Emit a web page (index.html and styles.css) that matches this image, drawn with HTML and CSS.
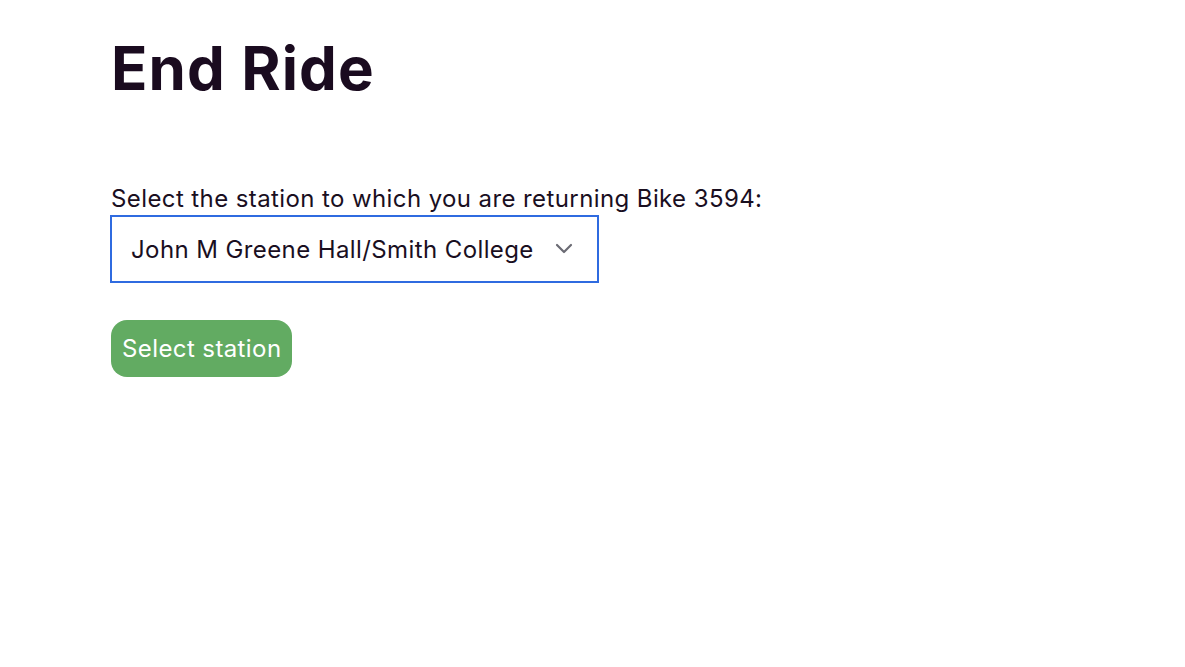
FILE: index.html
```html
<!DOCTYPE html>
<html lang="en">
<head>
<meta charset="utf-8">
<title>End Ride</title>
<link rel="stylesheet" href="styles.css">
</head>
<body>
<main class="page">
  <h1 class="title">End Ride</h1>
  <form class="form">
    <label class="label" for="station">Select the station to which you are returning Bike 3594:</label>
    <div class="select-wrap">
      <span class="select-value">John M Greene Hall/Smith College</span>
      <svg class="chevron" width="20" height="12" viewBox="0 0 20 12" aria-hidden="true">
        <path d="M3 2 L10 9 L17 2" fill="none" stroke="#6b6b74" stroke-width="2.2" stroke-linecap="round" stroke-linejoin="round"/>
      </svg>
    </div>
    <button type="button" class="btn">Select station</button>
  </form>
</main>
</body>
</html>
```

FILE: styles.css
```css
* { box-sizing: border-box; }
html, body { margin: 0; padding: 0; background: #fff; }
body {
  font-family: Inter, "Noto Sans", sans-serif;
  color: #1a0f1f;
}
.page {
  padding: 28px 0 0 111px;
}
.title {
  margin: 0;
  font-size: 60px;
  font-weight: 700;
  line-height: 80px;
  letter-spacing: 1.1px;
  color: #1a0b1f;
}
.form {
  margin-top: 76px;
  display: flex;
  flex-direction: column;
  align-items: flex-start;
}
.label {
  font-size: 24px;
  line-height: 30px;
  letter-spacing: 0.4px;
  margin-bottom: 1px;
}
.select-wrap {
  margin-left: -1px;
  width: 489px;
  height: 68px;
  border: 2px solid #2f6be0;
  display: flex;
  align-items: center;
  justify-content: space-between;
  padding: 0 23px 0 19px;
}
.select-value {
  font-size: 24px;
  letter-spacing: 0.4px;
  color: #1a0f1f;
}
.chevron { display: block; }
.btn {
  margin-top: 37px;
  background: #62ab62;
  color: #fff;
  border: none;
  border-radius: 16px;
  height: 57px;
  padding: 0 11px;
  font-family: inherit;
  font-size: 24px;
  letter-spacing: 0.4px;
  cursor: pointer;
}
```
